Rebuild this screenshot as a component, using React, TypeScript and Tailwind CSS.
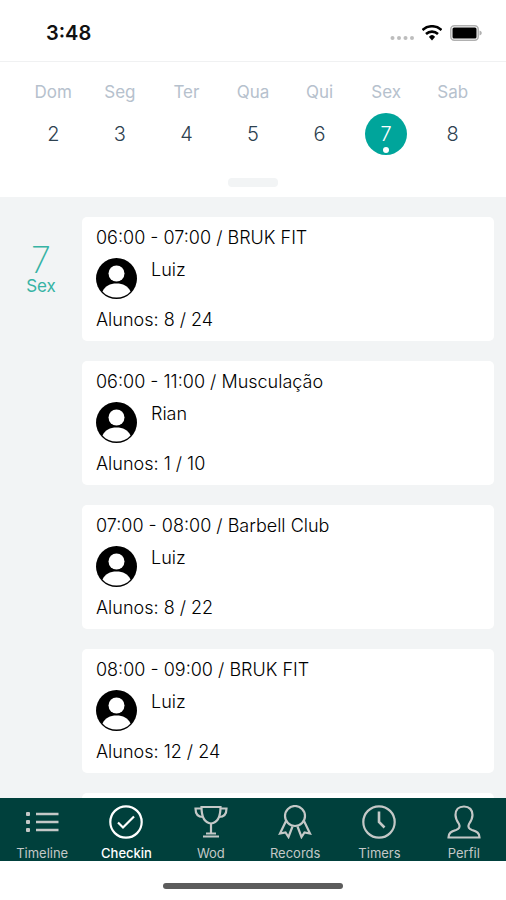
import type { ReactNode } from "react";
import clsx from "clsx";

const weekDays = [
  { label: "Dom", day: 2 },
  { label: "Seg", day: 3 },
  { label: "Ter", day: 4 },
  { label: "Qua", day: 5 },
  { label: "Qui", day: 6 },
  { label: "Sex", day: 7 },
  { label: "Sab", day: 8 },
];

const SELECTED_DAY = 7;

interface ClassSlot {
  id: string;
  time: string;
  name: string;
  coach: string;
  students: string;
}

const slots: ClassSlot[] = [
  { id: "1", time: "06:00 - 07:00", name: "BRUK FIT", coach: "Luiz", students: "8 / 24" },
  { id: "2", time: "06:00 - 11:00", name: "Musculação", coach: "Rian", students: "1 / 10" },
  { id: "3", time: "07:00 - 08:00", name: "Barbell Club", coach: "Luiz", students: "8 / 22" },
  { id: "4", time: "08:00 - 09:00", name: "BRUK FIT", coach: "Luiz", students: "12 / 24" },
];

const tabs: { label: string; icon: ReactNode }[] = [
  {
    label: "Timeline",
    icon: (
      <>
        <path d="M11 9H33.5M11 17H33.5M11 25H33.5" strokeWidth="2.6" />
        <g fill="currentColor" stroke="none">
          <rect x="1" y="7" width="4" height="4" rx="1" />
          <rect x="1" y="15" width="4" height="4" rx="1" />
          <rect x="1" y="23" width="4" height="4" rx="1" />
        </g>
      </>
    ),
  },
  {
    label: "Checkin",
    icon: (
      <>
        <circle cx="17" cy="17" r="15.7" />
        <path d="M9 17.5L14 22.5L25 11.5" />
      </>
    ),
  },
  {
    label: "Wod",
    icon: (
      <>
        <path d="M7.5 2H26.500C26.500 7 26 17.500 17 18.500C8 17.500 7.500 7 7.500 2Z" />
        <path d="M7.500 3.500H1.500C1.500 8.500 4 12 9 12M26.500 3.500H32.500C32.500 8.500 30 12 25 12" />
        <path d="M17 18.500V28M12 28.500H22M9 31.500H25" />
      </>
    ),
  },
  {
    label: "Records",
    icon: (
      <>
        <circle cx="17" cy="11" r="10" />
        <path d="M8 16L2 28.500L7.500 27.500L10.500 32L14.500 21.500M26 16L32 28.500L26.500 27.500L23.500 32L19.500 21.500" />
      </>
    ),
  },
  {
    label: "Timers",
    icon: (
      <>
        <circle cx="17" cy="17" r="15.700" />
        <path d="M17 6.500V17L22.500 22.500" strokeWidth="2.600" />
      </>
    ),
  },
  {
    label: "Perfil",
    icon: (
      <path d="M17 1.500C11.500 1.500 8.500 5 8.500 10C8.500 14 10 16 12 19C13.500 22 12 24 9 25C4 26.500 1.500 28 1.500 32.500H32.500C32.500 28 30 26.500 25 25C22 24 20.500 22 22 19C24 16 25.500 14 25.500 10C25.500 5 22.500 1.500 17 1.500Z" />
    ),
  },
];

function StatusBar() {
  return (
    <div className="flex h-[62px] shrink-0 items-center justify-between border-b border-[#f0f1f2] pt-1 pr-6 pl-[46px]">
      <span className="text-[20px] leading-6 font-semibold text-[#111]">3:48</span>
      <div className="flex items-center gap-2">
        <svg width="24" height="18" viewBox="0 0 24 18" fill="#bdbdbd" aria-hidden="true">
          <circle cx="2.500" cy="14" r="2" />
          <circle cx="9" cy="14" r="2" />
          <circle cx="15.500" cy="14" r="2" />
          <circle cx="22" cy="14" r="2" />
        </svg>
        <svg width="20" height="16" viewBox="0 0 20 16" fill="none" stroke="#000" strokeWidth="2.600" aria-hidden="true">
          <path d="M0.500 5C6 0 14 0 19.500 5" />
          <path d="M4 9C7.500 5.800 12.500 5.800 16 9" />
          <path d="M10 10C11.500 10 12.500 11 13 12L10 15.500L7 12C7.500 11 8.500 10 10 10Z" fill="#000" stroke="none" />
        </svg>
        <svg width="32" height="16" viewBox="0 0 32 16" aria-hidden="true">
          <rect x="0.800" y="0.800" width="27.400" height="14.400" rx="3.500" fill="none" stroke="#b0b0b0" strokeWidth="1.500" />
          <rect x="2.500" y="2.500" width="24" height="11" rx="1.500" fill="#000" />
          <path d="M29.500 5.500C32.500 6.500 32.500 9.500 29.500 10.500Z" fill="#b0b0b0" />
        </svg>
      </div>
    </div>
  );
}

function WeekStrip() {
  return (
    <div className="flex shrink-0 flex-col items-center bg-white px-5 pt-[18px] pb-2.5">
      <div className="grid w-full grid-cols-7">
        {weekDays.map(({ label, day }) => {
          const selected = day === SELECTED_DAY;
          return (
            <button key={label} type="button" className="flex flex-col items-center gap-[9px]">
              <span className="text-[17px] leading-6 text-[#b6c1cd]">{label}</span>
              <span
                className={clsx(
                  "relative flex size-[42px] items-center justify-center rounded-full text-[20px] font-light",
                  selected ? "bg-[#00a59b] text-white" : "text-[#2d4150]",
                )}
              >
                {day}
                {selected && <span className="absolute bottom-0.5 size-1.5 rounded-full bg-white" />}
              </span>
            </button>
          );
        })}
      </div>
      <div className="mt-[23px] h-[9px] w-[50px] rounded-sm bg-[#f2f4f5]" />
    </div>
  );
}

function Avatar() {
  return (
    <svg className="size-[41px] shrink-0" viewBox="0 0 41 41" aria-hidden="true">
      <circle cx="20.500" cy="20.500" r="20.500" fill="#000" />
      <circle cx="20.500" cy="15.500" r="8" fill="#fff" />
      <path d="M6.500 33.500C9 28 14 25.500 20.500 25.500S32 28 34.500 33.500C31 37.500 26 39.500 20.500 39.500S10 37.500 6.500 33.500Z" fill="#fff" />
    </svg>
  );
}

function SlotCard({ slot }: { slot: ClassSlot }) {
  return (
    <article className="rounded-[5px] bg-white px-3.5 py-[9px] text-[18px] leading-6 font-light text-black">
      <h2>
        {slot.time} / {slot.name}
      </h2>
      <div className="mt-2 flex gap-3.5">
        <Avatar />
        <span>{slot.coach}</span>
      </div>
      <p className="mt-[9px]">Alunos: {slot.students}</p>
    </article>
  );
}

function TabBar() {
  return (
    <nav className="grid h-[63px] shrink-0 grid-cols-6 bg-[#00403c]">
      {tabs.map(({ label, icon }) => (
        <button
          key={label}
          type="button"
          className={clsx(
            "flex flex-col items-center gap-1.5 pt-[7px] text-[13px] leading-4",
            label === "Checkin" ? "font-medium text-white" : "text-[#c4c8c7]",
          )}
        >
          <svg width="34" height="34" viewBox="0 0 34 34" fill="none" stroke="currentColor" strokeWidth="2.200" aria-hidden="true">
            {icon}
          </svg>
          {label}
        </button>
      ))}
    </nav>
  );
}

export default function App() {
  return (
    <div className="flex h-screen flex-col overflow-hidden bg-white font-['Inter',sans-serif]">
      <StatusBar />
      <WeekStrip />
      <main className="flex min-h-0 flex-1 overflow-hidden bg-[#f2f4f5] pt-5 pr-3">
        <div className="flex w-[82px] shrink-0 flex-col items-center pt-[27px] text-[#36b3a4]">
          <span className="text-[36px] leading-8 font-extralight">7</span>
          <span className="text-[17px] leading-5">Sex</span>
        </div>
        <div className="flex flex-1 flex-col gap-5">
          {slots.map((slot) => (
            <SlotCard key={slot.id} slot={slot} />
          ))}
          <div className="h-10 shrink-0 rounded-[5px] bg-white" />
        </div>
      </main>
      <TabBar />
      <div className="flex h-[39px] shrink-0 justify-center pt-[22px]">
        <div className="h-1.5 w-[180px] rounded-full bg-[#5c5c5c]" />
      </div>
    </div>
  );
}
